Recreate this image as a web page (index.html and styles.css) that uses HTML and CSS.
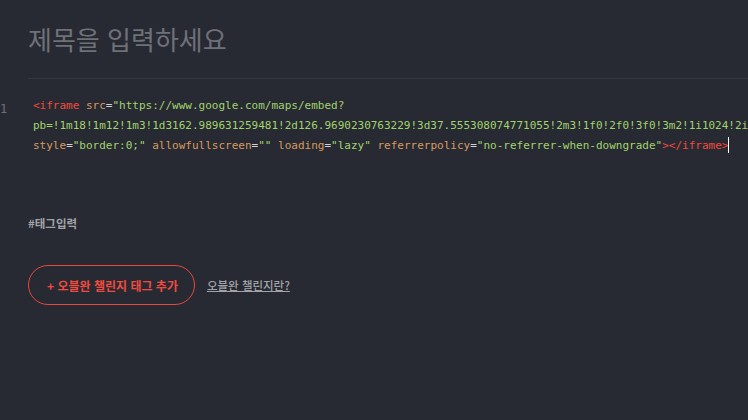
FILE: index.html
```html
<!DOCTYPE html>
<html lang="ko">
<head>
    <meta charset="UTF-8">
    <meta name="viewport" content="width=device-width, initial-scale=1.0">
    <title>글쓰기</title>
    <link rel="stylesheet" href="styles.css">
</head>
<body>
    <div class="editor-page">
        <div class="title-box">
            <div class="title-input">제목을 입력하세요</div>
        </div>

        <!-- code block editor -->
        <div class="code-editor">
            <div class="gutter">1</div>
            <div class="code">
                <div class="code-line"><span class="tag">&lt;iframe</span> <span class="attr">src</span>=<span class="str">"https://www.google.com/maps/embed?</span></div>
                <div class="code-line"><span class="str">pb=!1m18!1m12!1m3!1d3162.989631259481!2d126.9690230763229!3d37.555308074771055!2m3!1f0!2f0!3f0!3m2!1i1024!2i768!4f13.1!3m3!1m2!1s0x357c9e0e7b4a5d35%3A0x1b2e1a3a1b1c1d1e!2z!5e0!3m2!1sko!2skr!4v1730000000000!5m2!1sko!2skr"</span></div>
                <div class="code-line"><span class="attr">style</span>=<span class="str">"border:0;"</span> <span class="attr">allowfullscreen</span>=<span class="str">""</span> <span class="attr">loading</span>=<span class="str">"lazy"</span> <span class="attr">referrerpolicy</span>=<span class="str">"no-referrer-when-downgrade"</span><span class="tag">&gt;&lt;/iframe&gt;</span><span class="cursor"></span></div>
            </div>
        </div>

        <div class="tag-input">#태그입력</div>

        <div class="challenge">
            <button class="challenge-button">+ 오블완 챌린지 태그 추가</button>
            <a href="#" class="challenge-link">오블완 챌린지란?</a>
        </div>
    </div>
</body>
</html>
```

FILE: styles.css
```css
body {
    margin: 0;
    background-color: #272a32;
    font-family: "Noto Sans CJK KR", "Noto Sans", sans-serif;
    overflow: hidden;
}
.editor-page {
    width: 748px;
    height: 420px;
}
.title-box {
    margin-left: 28px;
    padding-top: 19px;
    padding-bottom: 19px;
    border-bottom: 1px solid #33363e;
}
.title-input {
    font-size: 26px;
    line-height: 40px;
    color: #6f7178;
}
.code-editor {
    display: flex;
    margin-top: 17px;
    font-family: "DejaVu Sans Mono", monospace;
    font-size: 11px;
    line-height: 20px;
    color: #d0d3d8;
}
.gutter {
    width: 29px;
    color: #6f7178;
    font-size: 12px;
    padding-top: 3px;
}
.code {
    padding-left: 4px;
    overflow: hidden;
    flex: 1;
}
.code-line {
    height: 20px;
    white-space: pre;
}
.tag {
    color: #f4493d;
}
.attr {
    color: #d99a5e;
}
.str {
    color: #a3d36d;
}
.cursor {
    display: inline-block;
    width: 1px;
    height: 16px;
    background-color: #ffffff;
    vertical-align: -4px;
}
.tag-input {
    margin: 58px 0 0 28px;
    font-size: 11.5px;
    font-weight: bold;
    color: #a1a3a8;
    line-height: 18px;
}
.challenge {
    display: flex;
    align-items: center;
    gap: 12px;
    margin: 33px 0 0 28px;
}
.challenge-button {
    height: 40px;
    padding: 0 16px 0 18px;
    border: 1px solid #e8483d;
    border-radius: 20px;
    background-color: transparent;
    color: #f04b40;
    font-family: "Noto Sans CJK KR", "Noto Sans", sans-serif;
    font-size: 12px;
    font-weight: bold;
    cursor: pointer;
}
.challenge-link {
    color: #a1a3a8;
    font-size: 11.5px;
    font-weight: 500;
    text-decoration: underline;
}
```
